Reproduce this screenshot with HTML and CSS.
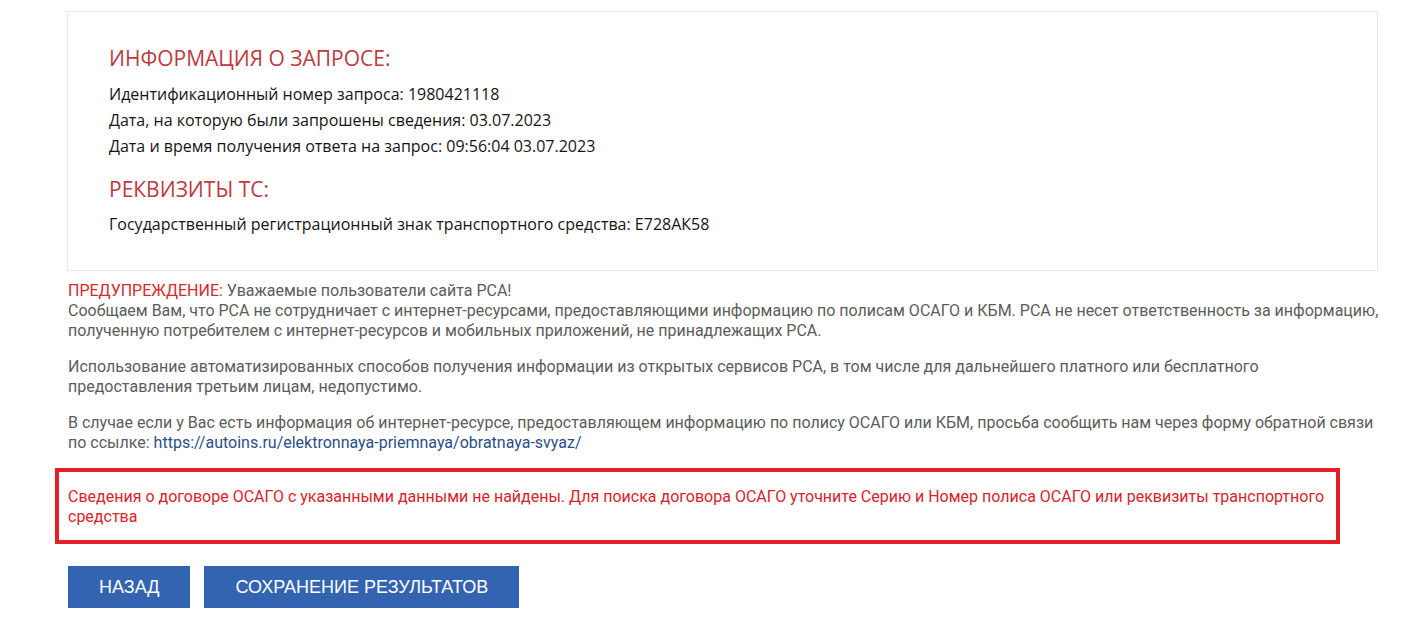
FILE: index.html
```html
<!DOCTYPE html>
<html lang="ru">
<head>
    <meta charset="UTF-8">
    <meta name="viewport" content="width=device-width, initial-scale=1.0">
    <title>Результат запроса</title>
    <link rel="stylesheet" href="styles.css">
</head>
<body>
    <div class="page">
        <div class="info-box">
            <h2 class="info-title">ИНФОРМАЦИЯ О ЗАПРОСЕ:</h2>
            <div class="info-lines">
                <p>Идентификационный номер запроса: 1980421118</p>
                <p>Дата, на которую были запрошены сведения: 03.07.2023</p>
                <p>Дата и время получения ответа на запрос: 09:56:04 03.07.2023</p>
            </div>
            <h2 class="info-title second">РЕКВИЗИТЫ ТС:</h2>
            <div class="info-lines">
                <p>Государственный регистрационный знак транспортного средства: Е728АК58</p>
            </div>
        </div>

        <div class="warning">
            <p>
                <span class="warning-label">ПРЕДУПРЕЖДЕНИЕ:</span> Уважаемые пользователи сайта РСА!<br>
                Сообщаем Вам, что РСА не сотрудничает с интернет-ресурсами, предоставляющими информацию по полисам ОСАГО и КБМ. РСА не несет ответственность за информацию, полученную потребителем с интернет-ресурсов и мобильных приложений, не принадлежащих РСА.
            </p>
            <p>
                Использование автоматизированных способов получения информации из открытых сервисов РСА, в том числе для дальнейшего платного или бесплатного предоставления третьим лицам, недопустимо.
            </p>
            <p>
                В случае если у Вас есть информация об интернет-ресурсе, предоставляющем информацию по полису ОСАГО или КБМ, просьба сообщить нам через форму обратной связи по ссылке: <a href="https://autoins.ru/elektronnaya-priemnaya/obratnaya-svyaz/">https://autoins.ru/elektronnaya-priemnaya/obratnaya-svyaz/</a>
            </p>
        </div>

        <div class="not-found">
            Сведения о договоре ОСАГО с указанными данными не найдены. Для поиска договора ОСАГО уточните Серию и Номер полиса ОСАГО или реквизиты транспортного средства
        </div>

        <div class="actions">
            <button class="btn">НАЗАД</button>
            <button class="btn">СОХРАНЕНИЕ РЕЗУЛЬТАТОВ</button>
        </div>
    </div>
</body>
</html>
```

FILE: styles.css
```css
body {
    margin: 0;
    background: #fff;
    font-family: Roboto, "Liberation Sans", Arial, sans-serif;
}
.page {
    width: 1311px;
    padding: 11px 0 0 67px;
}
.info-box {
    border: 1px solid #e9e9e9;
    padding: 31px 41px 33px 41px;
    font-family: "Open Sans", "Liberation Sans", sans-serif;
}
.info-title {
    margin: 0 0 8px 0;
    font-size: 21px;
    line-height: 30px;
    font-weight: 400;
    color: #bd3a3e;
}
.info-title.second {
    margin-top: 15px;
    margin-bottom: 7px;
}
.info-lines p {
    margin: 0;
    font-size: 16px;
    line-height: 26px;
    color: #141414;
}
.warning {
    margin: 10px -5px 0 0;
    padding-left: 1px;
    font-size: 16px;
    line-height: 20px;
    color: #5c5c5c;
}
.warning p {
    margin: 0 0 16px 0;
}
.warning p:last-child {
    margin-bottom: 0;
}
.warning-label {
    color: #d52b2b;
}
.warning a {
    color: #2a4f8a;
    text-decoration: none;
}
.not-found {
    margin: 15px 0 0 -12px;
    width: 1259px;
    border: 4px solid #e3202a;
    padding: 15px 9px 13px 9px;
    font-size: 16px;
    line-height: 20px;
    color: #d9232b;
}
.actions {
    display: flex;
    gap: 14px;
    margin-top: 22px;
    padding-left: 1px;
}
.btn {
    height: 42px;
    padding: 0 31px;
    border: none;
    background-color: #3364b1;
    color: #fff;
    font-family: "Liberation Sans", Arial, sans-serif;
    font-size: 18px;
    cursor: pointer;
}
.btn:hover {
    background-color: #28559c;
}
```
